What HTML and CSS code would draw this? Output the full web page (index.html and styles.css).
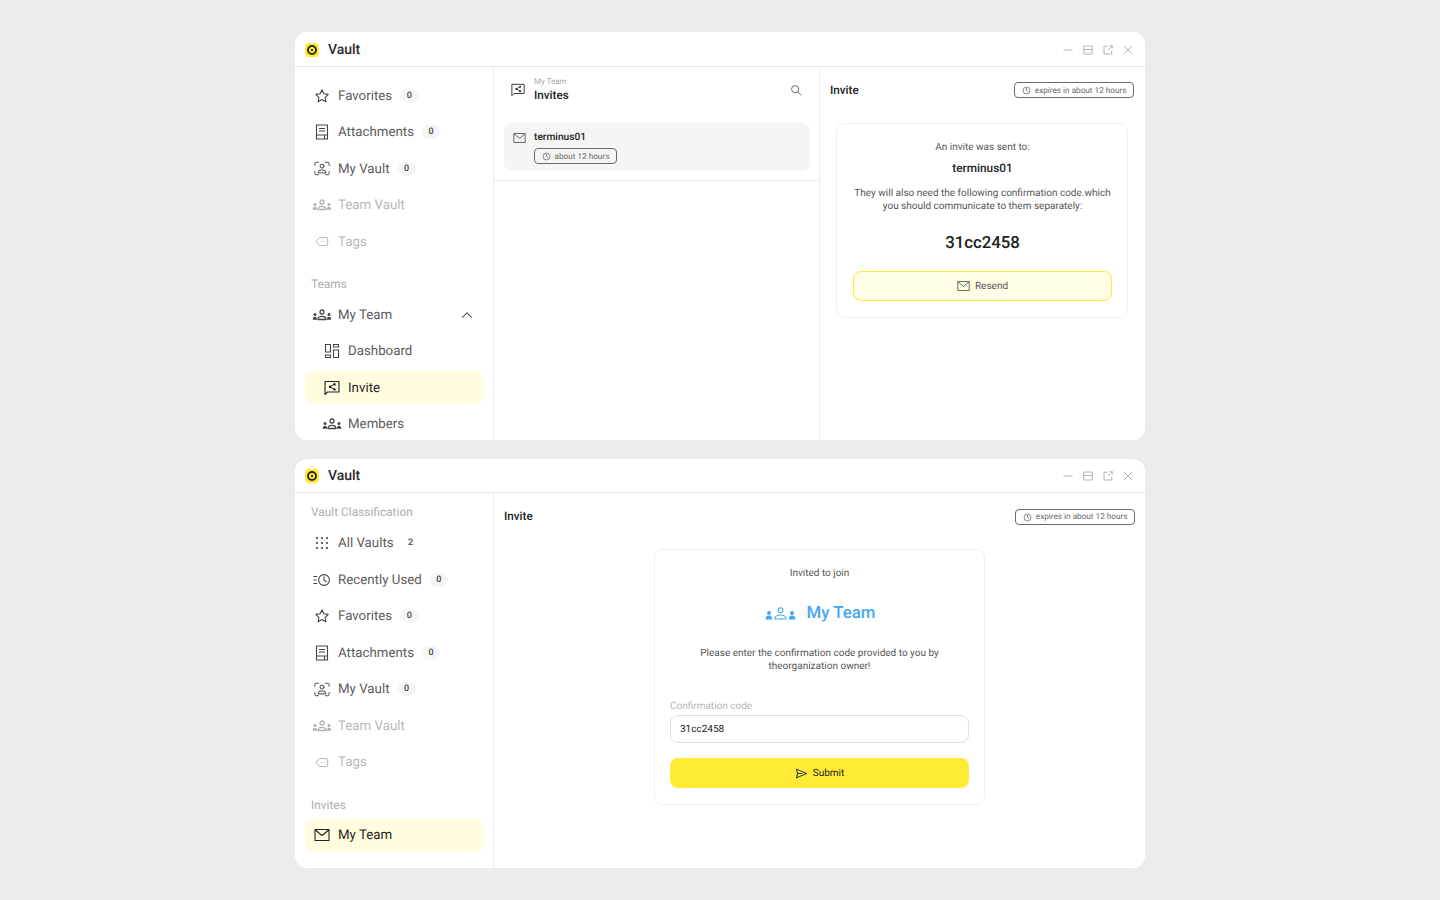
FILE: index.html
```html
<!DOCTYPE html>
<html lang="en">
<head>
    <meta charset="UTF-8" />
    <meta name="viewport" content="width=device-width, initial-scale=1.0" />
    <title>Vault</title>
    <link rel="stylesheet" href="styles.css">
</head>
<body>

<svg class="sprite" width="0" height="0">
    <symbol id="i-star" viewBox="0 0 16 16"><path d="M8 1.800l1.900 4 4.300.6-3.100 3 .8 4.300L8 11.600l-3.900 2.100.8-4.300-3.100-3 4.300-.6z" fill="none" stroke="currentColor" stroke-width="1.100" stroke-linejoin="round"/></symbol>
    <symbol id="i-doc" viewBox="0 0 16 16"><path d="M2.500 1h11v14h-11zM5 4.500h6M5 7h6M2.500 11h11M10.500 11v4" fill="none" stroke="currentColor" stroke-width="1.100"/></symbol>
    <symbol id="i-vault" viewBox="0 0 18 16"><g fill="none" stroke="currentColor" stroke-width="1.100" stroke-linecap="round"><path d="M1 4.500V2.500q0-1.500 1.500-1.500H5M13 1h2.500q1.500 0 1.500 1.500v2M17 11.500v2q0 1.500-1.500 1.500H13M5 15H2.500Q1 15 1 13.500v-2"/><circle cx="9" cy="5.300" r="2.200"/><path d="M4.500 12.500q0-3 4.500-3t4.500 3z"/></g></symbol>
    <symbol id="i-team" viewBox="0 0 20 12"><circle cx="10" cy="3" r="2" fill="none" stroke="currentColor" stroke-width="1.300"/><path d="M6 10.500q0-3.200 4-3.200t4 3.200z" fill="none" stroke="currentColor" stroke-width="1.300" stroke-linejoin="round"/><circle cx="3" cy="5.600" r="1.500" fill="currentColor"/><path d="M.8 10.800q0-3 2.200-3t2 3z" fill="currentColor"/><circle cx="17" cy="5.600" r="1.500" fill="currentColor"/><path d="M19.200 10.800q0-3-2.200-3t-2 3z" fill="currentColor"/></symbol>
    <symbol id="i-team-wide" viewBox="0 0 31 13"><circle cx="15.500" cy="3.200" r="2.400" fill="none" stroke="currentColor" stroke-width="1.100"/><path d="M10 12q0-4 5.500-4t5.500 4z" fill="none" stroke="currentColor" stroke-width="1.100" stroke-linejoin="round"/><circle cx="4" cy="6" r="2" fill="currentColor"/><path d="M.5 12.500q0-4 3.500-4t3 4z" fill="currentColor"/><circle cx="27" cy="6" r="2" fill="currentColor"/><path d="M30.500 12.500q0-4-3.500-4t-3 4z" fill="currentColor"/></symbol>
    <symbol id="i-tag" viewBox="0 0 16 12"><path d="M5 1.500h8q1.500 0 1.500 1.500v6q0 1.500-1.500 1.500H5L1.200 6z" fill="none" stroke="currentColor" stroke-width="1.100" stroke-linejoin="round"/><path d="M7 6h.01M9.300 6h.01M11.600 6h.01" stroke="currentColor" stroke-width="1.100" stroke-linecap="round"/></symbol>
    <symbol id="i-chevron" viewBox="0 0 12 12"><path d="M1.500 8.300L6 3.800l4.500 4.500" fill="none" stroke="currentColor" stroke-width="1.100" stroke-linecap="round" stroke-linejoin="round"/></symbol>
    <symbol id="i-dash" viewBox="0 0 16 16"><path d="M1.500 1.500h5v7.500h-5zM1.500 12h5v2.500h-5zM9.500 1.500h5V4h-5zM9.500 7h5v7.500h-5z" fill="none" stroke="currentColor" stroke-width="1.100"/></symbol>
    <symbol id="i-invite" viewBox="0 0 16 16"><path d="M1 1.500h14v10.500H3.500L1 14.500z" fill="none" stroke="currentColor" stroke-width="1.100" stroke-linejoin="round"/><path d="M10.500 4.200L6 6.800l4.500 2.600" fill="none" stroke="currentColor" stroke-width="1"/><circle cx="10.500" cy="4.200" r="1.200" fill="currentColor"/><circle cx="6" cy="6.800" r="1.200" fill="currentColor"/><circle cx="10.500" cy="9.400" r="1.200" fill="currentColor"/></symbol>
    <symbol id="i-mail" viewBox="0 0 16 14"><path d="M1 1.500h14v11H1zM1.300 2l6.700 5.500L14.700 2" fill="none" stroke="currentColor" stroke-width="1.100" stroke-linejoin="round"/></symbol>
    <symbol id="i-clock" viewBox="0 0 12 12"><circle cx="6" cy="6" r="4.600" fill="none" stroke="currentColor" stroke-width=".9"/><path d="M6 3.200V6l1.900 1.500" fill="none" stroke="currentColor" stroke-width=".9" stroke-linecap="round"/></symbol>
    <symbol id="i-search" viewBox="0 0 14 14"><circle cx="6" cy="6" r="4.200" fill="none" stroke="currentColor" stroke-width="1.100"/><path d="M9.200 9.200l3.600 3.600" stroke="currentColor" stroke-width="1.100" stroke-linecap="round"/></symbol>
    <symbol id="i-send" viewBox="0 0 14 12"><path d="M1.500 1.200L12.500 6 1.500 10.800 2.800 6zM2.800 6h5" fill="none" stroke="currentColor" stroke-width="1.100" stroke-linejoin="round"/></symbol>
    <symbol id="i-grid" viewBox="0 0 14 14"><g fill="currentColor"><circle cx="2" cy="2" r="1.100"/><circle cx="7" cy="2" r="1.100"/><circle cx="12" cy="2" r="1.100"/><circle cx="2" cy="7" r="1.100"/><circle cx="7" cy="7" r="1.100"/><circle cx="12" cy="7" r="1.100"/><circle cx="2" cy="12" r="1.100"/><circle cx="7" cy="12" r="1.100"/><circle cx="12" cy="12" r="1.100"/></g></symbol>
    <symbol id="i-recent" viewBox="0 0 18 14"><circle cx="11" cy="7" r="5.400" fill="none" stroke="currentColor" stroke-width="1.100"/><path d="M11 3.800V7l2.200 1.700M.8 3.500h3M.8 7h2.500M.8 10.500h3" fill="none" stroke="currentColor" stroke-width="1.100" stroke-linecap="round"/></symbol>
    <symbol id="i-min" viewBox="0 0 12 12"><path d="M1.500 6h9" stroke="currentColor" stroke-width="1"/></symbol>
    <symbol id="i-max" viewBox="0 0 12 12"><path d="M1.800 2h8.400v8H1.800zM1.800 5.500h8.400" fill="none" stroke="currentColor" stroke-width="1"/></symbol>
    <symbol id="i-pop" viewBox="0 0 12 12"><path d="M9.800 6.500v3.500H2V2.200h3.500M6 6l4.300-4.300M7.500 1.700h2.800v2.800" fill="none" stroke="currentColor" stroke-width="1"/></symbol>
    <symbol id="i-close" viewBox="0 0 12 12"><path d="M2.200 2.200l7.600 7.600M9.800 2.200l-7.600 7.600" stroke="currentColor" stroke-width="1"/></symbol>
</svg>

<div class="page">

    <section class="window window-top">
        <header class="titlebar">
            <span class="logo"><span class="logo-ring"></span></span>
            <span class="app-name">Vault</span>
            <span class="controls">
                <svg class="ctl"><use href="#i-min"/></svg>
                <svg class="ctl"><use href="#i-max"/></svg>
                <svg class="ctl"><use href="#i-pop"/></svg>
                <svg class="ctl"><use href="#i-close"/></svg>
            </span>
        </header>
        <div class="window-body">
            <nav class="sidebar">
                <a class="nav-item"><span class="nav-icon"><svg class="ic16"><use href="#i-star"/></svg></span>Favorites<span class="badge">0</span></a>
                <a class="nav-item"><span class="nav-icon"><svg class="ic16"><use href="#i-doc"/></svg></span>Attachments<span class="badge">0</span></a>
                <a class="nav-item"><span class="nav-icon"><svg class="ic-vault"><use href="#i-vault"/></svg></span>My Vault<span class="badge">0</span></a>
                <a class="nav-item off"><span class="nav-icon"><svg class="ic-team"><use href="#i-team"/></svg></span>Team Vault</a>
                <a class="nav-item off"><span class="nav-icon"><svg class="ic-tag"><use href="#i-tag"/></svg></span>Tags</a>

                <div class="nav-label">Teams</div>
                <a class="nav-item"><span class="nav-icon"><svg class="ic-team"><use href="#i-team"/></svg></span>My Team<svg class="chevron"><use href="#i-chevron"/></svg></a>
                <a class="nav-item sub"><span class="nav-icon"><svg class="ic16"><use href="#i-dash"/></svg></span>Dashboard</a>
                <a class="nav-item sub active"><span class="nav-icon"><svg class="ic16"><use href="#i-invite"/></svg></span>Invite</a>
                <a class="nav-item sub"><span class="nav-icon"><svg class="ic-team"><use href="#i-team"/></svg></span>Members</a>
            </nav>

            <div class="list-pane">
                <div class="list-head">
                    <svg class="ic-head"><use href="#i-invite"/></svg>
                    <div class="list-title">
                        <div class="crumb">My Team</div>
                        <div class="heading">Invites</div>
                    </div>
                    <svg class="ic-search"><use href="#i-search"/></svg>
                </div>
                <div class="list-section">
                    <div class="invite-row">
                        <svg class="ic-mail"><use href="#i-mail"/></svg>
                        <div>
                            <div class="invite-name">terminus01</div>
                            <span class="tag"><svg class="ic-clock"><use href="#i-clock"/></svg>about 12 hours</span>
                        </div>
                    </div>
                </div>
            </div>

            <div class="detail">
                <div class="detail-head">
                    <span class="heading">Invite</span>
                    <span class="tag"><svg class="ic-clock"><use href="#i-clock"/></svg>expires in about 12 hours</span>
                </div>
                <div class="card sent-card">
                    <p class="line sent-to">An invite was sent to:</p>
                    <p class="sent-name">terminus01</p>
                    <p class="line">They will also need the following confirmation code.which you should communicate to them separately:</p>
                    <p class="code">31cc2458</p>
                    <button class="btn btn-soft"><svg class="ic-mail"><use href="#i-mail"/></svg>Resend</button>
                </div>
            </div>
        </div>
    </section>

    <section class="window window-bottom">
        <header class="titlebar">
            <span class="logo"><span class="logo-ring"></span></span>
            <span class="app-name">Vault</span>
            <span class="controls">
                <svg class="ctl"><use href="#i-min"/></svg>
                <svg class="ctl"><use href="#i-max"/></svg>
                <svg class="ctl"><use href="#i-pop"/></svg>
                <svg class="ctl"><use href="#i-close"/></svg>
            </span>
        </header>
        <div class="window-body">
            <nav class="sidebar sidebar-tight">
                <div class="nav-label first">Vault Classification</div>
                <a class="nav-item"><span class="nav-icon"><svg class="ic-grid"><use href="#i-grid"/></svg></span>All Vaults<span class="badge plain">2</span></a>
                <a class="nav-item"><span class="nav-icon"><svg class="ic-recent"><use href="#i-recent"/></svg></span>Recently Used<span class="badge">0</span></a>
                <a class="nav-item"><span class="nav-icon"><svg class="ic16"><use href="#i-star"/></svg></span>Favorites<span class="badge">0</span></a>
                <a class="nav-item"><span class="nav-icon"><svg class="ic16"><use href="#i-doc"/></svg></span>Attachments<span class="badge">0</span></a>
                <a class="nav-item"><span class="nav-icon"><svg class="ic-vault"><use href="#i-vault"/></svg></span>My Vault<span class="badge">0</span></a>
                <a class="nav-item off"><span class="nav-icon"><svg class="ic-team"><use href="#i-team"/></svg></span>Team Vault</a>
                <a class="nav-item off"><span class="nav-icon"><svg class="ic-tag"><use href="#i-tag"/></svg></span>Tags</a>

                <div class="nav-label">Invites</div>
                <a class="nav-item active"><span class="nav-icon"><svg class="ic16"><use href="#i-mail"/></svg></span>My Team</a>
            </nav>

            <div class="join-pane">
                <div class="detail-head">
                    <span class="heading">Invite</span>
                    <span class="tag"><svg class="ic-clock"><use href="#i-clock"/></svg>expires in about 12 hours</span>
                </div>
                <div class="card join-card">
                    <p class="line">Invited to join</p>
                    <div class="join-team"><svg class="ic-team-lg"><use href="#i-team-wide"/></svg>My Team</div>
                    <p class="line">Please enter the confirmation code provided to you by<br>theorganization owner!</p>
                    <label class="field-label" for="code">Confirmation code</label>
                    <input class="field" id="code" value="31cc2458">
                    <button class="btn btn-solid"><svg class="ic-send"><use href="#i-send"/></svg>Submit</button>
                </div>
            </div>
        </div>
    </section>

</div>

</body>
</html>
```

FILE: styles.css
```css
*{ box-sizing:border-box; }
body{ margin:0; height:900px; overflow:hidden; background:#ececec; font-family:"Roboto", sans-serif; color:#1f1f1f; text-rendering:geometricPrecision; }
p{ margin:0; }
.sprite{ position:absolute; }

.page{ width:850px; margin:0 auto; padding-top:32px; display:flex; flex-direction:column; gap:19px; }

.window{ background:#fff; border-radius:12px; overflow:hidden; display:flex; flex-direction:column; }
.window-top{ height:408px; }
.window-bottom{ height:409px; }

/* title bar */
.titlebar{ height:35px; flex:none; display:flex; align-items:center; padding:1px 11px 0 10px; border-bottom:1px solid #e6e6e6; }
.window-bottom .titlebar{ height:34px; padding-top:0; }
.logo{ width:14px; height:14px; border-radius:4px; background:#ffe93b; display:flex; align-items:center; justify-content:center; }
.logo-ring{ width:10px; height:10px; border-radius:50%; border:2.5px solid #2e2e26; background:radial-gradient(circle, #2e2e26 0 1px, #ffe93b 1.2px); }
.app-name{ margin-left:9px; font-size:14px; font-weight:500; color:#2b2b2b; }
.controls{ margin-left:auto; display:flex; gap:8px; color:#b4b4b4; }
.ctl{ width:12px; height:12px; }

.window-body{ flex:1; min-height:0; display:flex; }

/* sidebar */
.sidebar{ width:199px; flex:none; padding:12px 9px 0 10px; border-right:1px solid #ececec; overflow:hidden; }
.sidebar-tight{ padding-top:11px; }
.nav-item{ height:33px; margin-bottom:3.5px; padding:1.5px 0 0 6px; display:flex; align-items:center; border-radius:8px; font-size:13.3px; color:#5c5c5c; }
.nav-item.off{ color:#b8b8b8; }
.nav-item.sub{ padding-left:16px; }
.nav-item.active{ background:#fffce0; color:#1f1f1f; }
.nav-icon{ width:21px; height:16px; margin:-1.5px 6px 0 0; display:flex; align-items:center; justify-content:center; flex:none; color:#444; }
.nav-item.off .nav-icon{ color:#b0b0b0; }
.nav-item.active .nav-icon{ color:#222; }
.nav-label{ height:16px; margin:18px 0 6px 6px; font-size:11.9px; line-height:16px; color:#aeaeae; }
.nav-label.first{ margin-top:0; margin-bottom:6.5px; }
.badge{ width:18px; height:14px; margin:-1.5px 0 0 8px; border-radius:7px; background:#f5f5f5; font-size:9px; font-weight:500; line-height:14px; text-align:center; color:#444; }
.badge.plain{ background:#fff; }
.chevron{ width:12px; height:12px; margin:-1.5px 11px 0 auto; color:#555; }

.ic16{ width:16px; height:16px; }
.ic-vault{ width:16px; height:15px; }
.ic-team{ width:20px; height:12px; }
.ic-tag{ width:14px; height:11px; }
.ic-grid{ width:14px; height:14px; }
.ic-recent{ width:18px; height:14px; }

/* invites list */
.list-pane{ width:326px; flex:none; border-right:1px solid #ececec; }
.list-head{ height:47px; padding:0 17px 0 17px; display:flex; align-items:center; }
.ic-head{ width:14px; height:14px; margin:0 9px 2px 0; color:#333; }
.list-title{ flex:1; padding-bottom:1px; }
.crumb{ font-size:8px; line-height:10px; color:#a8a8a8; margin-bottom:1px; }
.heading{ font-size:11.7px; font-weight:500; line-height:15px; color:#222; }
.ic-search{ width:12px; height:12px; margin-bottom:2px; color:#666; }
.list-section{ padding:9px 9px 9px 10px; border-bottom:1px solid #ececec; }
.invite-row{ height:48px; padding:8px 9px 0; display:flex; gap:8px; border-radius:8px; background:#f5f5f5; }
.ic-mail{ width:13px; height:12px; margin-top:1px; color:#555; flex:none; }
.invite-name{ font-size:10.2px; font-weight:500; line-height:13px; color:#222; margin-bottom:4px; }

.tag{ width:fit-content; height:16px; padding:1px 6.5px 0; display:flex; align-items:center; gap:4px; border:1px solid #6a6a6a; border-radius:4px; font-size:8.2px; color:#666; white-space:nowrap; }
.ic-clock{ width:9px; height:9px; color:#555; }

/* detail panel */
.detail{ flex:1; min-width:0; }
.detail-head{ height:46px; padding:0 11px 0 10px; display:flex; align-items:center; justify-content:space-between; }
.card{ border:1px solid #f0f0f0; border-radius:8px; background:#fff; text-align:center; }
.line{ font-size:10px; line-height:13px; color:#555; }
.sent-card{ height:195px; margin:10px 17px 0 16px; padding:16.5px 15px 0 16px; }
.sent-to{ margin-bottom:6.5px; }
.sent-name{ font-size:11.8px; font-weight:500; line-height:16px; margin-bottom:10.5px; color:#222; }
.code{ margin:20.5px 0 18px; font-size:16.8px; font-weight:500; line-height:20px; color:#222; }
.btn{ width:100%; height:30px; display:flex; align-items:center; justify-content:center; gap:5px; border-radius:8px; font-family:inherit; font-size:10px; padding:0; text-rendering:geometricPrecision; }
.btn .ic-mail{ margin-top:0; }
.btn-soft{ background:#fffde6; border:1px solid #ffeb3b; color:#555; }
.btn-solid{ background:#ffeb33; border:none; color:#222; margin-top:15px; }

/* invite join */
.join-pane{ flex:1; min-width:0; }
.join-pane .detail-head{ height:47px; padding-right:10px; }
.join-card{ width:331px; height:256px; margin:9px auto 0; padding:17px 15px 0; }
.join-team{ margin:21px 0 22px; padding-left:1px; height:24px; display:flex; align-items:center; justify-content:center; gap:11px; font-size:16.8px; font-weight:500; color:#45a8f5; }
.ic-team-lg{ width:31px; height:13px; margin-top:1px; }
.field-label{ display:block; margin-top:26.5px; font-size:10px; line-height:13px; color:#b4b4b4; text-align:left; }
.field{ display:block; width:100%; height:28px; margin-top:2.5px; padding:0 9px; border:1px solid #e0e0e0; border-radius:8px; font-family:inherit; font-size:10px; color:#222; outline:none; text-rendering:geometricPrecision; }
.ic-send{ width:13px; height:11px; color:#333; }
```
